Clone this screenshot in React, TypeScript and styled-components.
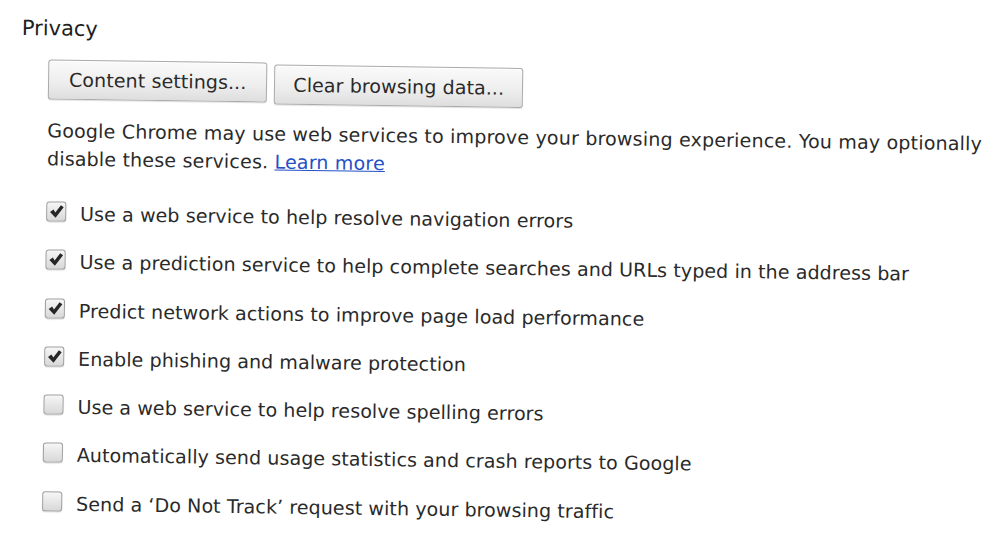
import React from "react";
import styled, { createGlobalStyle } from "styled-components";

const Global = createGlobalStyle`
  html, body { margin: 0; padding: 0; background: #ffffff; overflow: hidden; }
  body { font-family: "DejaVu Sans", "Liberation Sans", sans-serif; color: #2a2a2a; }
`;

const Frame = styled.div`
  width: 1000px;
  height: 554px;
  overflow: hidden;
  background: #ffffff;
`;

const Page = styled.div`
  box-sizing: border-box;
  padding: 14px 0 0 22px;
  transform: rotate(0.8deg);
  transform-origin: 22px 14px;
`;

const Heading = styled.h3`
  margin: 0;
  font-size: 21px;
  font-weight: normal;
  line-height: 28px;
  color: #1e1e1e;
`;

const Section = styled.div`
  padding: 17px 0 0 27px;
  display: flex;
  flex-direction: column;
`;

const ButtonRow = styled.div`
  display: flex;
  gap: 7px;
  align-items: flex-start;
`;

const Button = styled.button<{ $drop?: number; $pad: number }>`
  font-family: inherit;
  font-size: 19px;
  letter-spacing: 0.1px;
  color: #2a2a2a;
  height: 40px;
  padding: 0 ${(p) => p.$pad}px;
  margin-top: ${(p) => p.$drop ?? 0}px;
  border: 1px solid #aaaaaa;
  border-radius: 3px;
  background: linear-gradient(#fafafa, #ededed 60%, #dedede);
  box-shadow: 0 1px 1px rgba(0, 0, 0, 0.12), inset 0 1px 0 #ffffff;
`;

const Description = styled.p`
  margin: 15px 0 0 0;
  width: 950px;
  font-size: 19px;
  letter-spacing: 0.2px;
  line-height: 28px;
  color: #2a2a2a;
`;

const Link = styled.a`
  color: #2450c8;
  text-decoration: underline;
`;

const List = styled.div`
  margin-top: 27px;
  display: flex;
  flex-direction: column;
  gap: 20.3px;
`;

const Row = styled.label`
  display: flex;
  align-items: center;
  gap: 14px;
  font-size: 19px;
  letter-spacing: 0.1px;
  line-height: 28px;
  color: #2a2a2a;
`;

const Box = styled.span`
  width: 20px;
  height: 20px;
  margin-top: -4px;
  box-sizing: border-box;
  border: 1px solid #9d9d9d;
  border-radius: 3px;
  background: linear-gradient(#f6f6f6, #d8d8d8);
  box-shadow: 0 1px 1px rgba(0, 0, 0, 0.15);
  display: flex;
  align-items: center;
  justify-content: center;
  flex: none;
`;

const Check = () => (
  <svg width="15" height="14" viewBox="0 0 15 14">
    <path
      d="M0.8 7.6 L4.2 5 L6.1 8 L11.6 0.6 L14.4 2.6 L6.4 13.2 Z"
      fill="#262626"
    />
  </svg>
);

const items: { label: string; checked: boolean }[] = [
  { label: "Use a web service to help resolve navigation errors", checked: true },
  {
    label:
      "Use a prediction service to help complete searches and URLs typed in the address bar",
    checked: true,
  },
  { label: "Predict network actions to improve page load performance", checked: true },
  { label: "Enable phishing and malware protection", checked: true },
  { label: "Use a web service to help resolve spelling errors", checked: false },
  {
    label: "Automatically send usage statistics and crash reports to Google",
    checked: false,
  },
  {
    label: "Send a \u2018Do Not Track\u2019 request with your browsing traffic",
    checked: false,
  },
];

export default function App() {
  return (
    <Frame>
      <Global />
      <Page>
        <Heading>Privacy</Heading>
        <Section>
          <ButtonRow>
            <Button $pad={20}>Content settings...</Button>
            <Button $pad={18} $drop={2}>
              Clear browsing data...
            </Button>
          </ButtonRow>
          <Description>
            Google Chrome may use web services to improve your browsing experience. You may
            optionally disable these services. <Link href="#">Learn more</Link>
          </Description>
          <List>
            {items.map((it) => (
              <Row key={it.label}>
                <Box>{it.checked && <Check />}</Box>
                {it.label}
              </Row>
            ))}
          </List>
        </Section>
      </Page>
    </Frame>
  );
}
